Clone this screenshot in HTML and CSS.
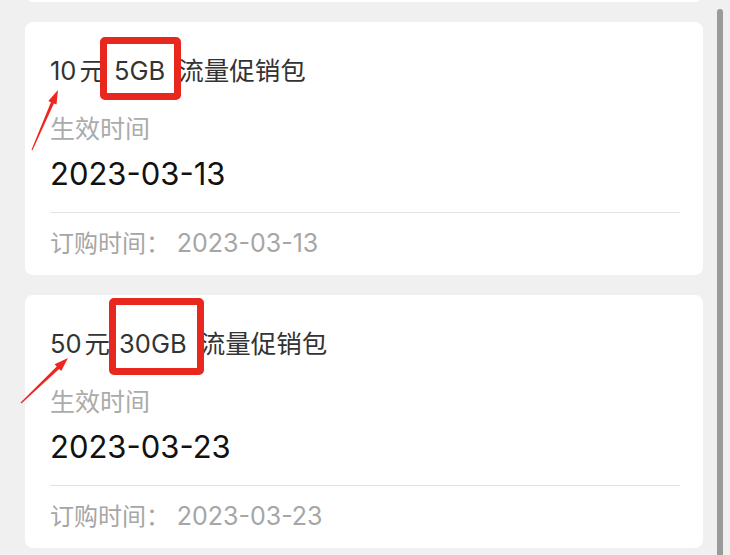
FILE: index.html
```html
<!DOCTYPE html>
<html>
<head>
    <title>流量包订购记录</title>
    <link rel="stylesheet" href="styles.css">
</head>
<body>
    <div class="list">
        <div class="card"></div>

        <div class="card">
            <div class="title"><span class="num">10</span>元<span class="mark mark-a">5GB</span>流量促销包</div>
            <div class="label">生效时间</div>
            <div class="date">2023-03-13</div>
            <div class="foot">订购时间： <span class="foot-date">2023-03-13</span></div>
            <svg class="arrow" width="80" height="140" viewBox="0 0 80 140">
                <polygon points="58,68 56.5,82.6 53.9,81.4 32.5,128.2 31.5,127.8 50.9,80.2 48.3,79" />
            </svg>
        </div>

        <div class="card">
            <div class="title"><span class="num">50</span>元<span class="mark mark-b">30GB</span>流量促销包</div>
            <div class="label">生效时间</div>
            <div class="date">2023-03-23</div>
            <div class="foot">订购时间： <span class="foot-date">2023-03-23</span></div>
            <svg class="arrow" width="80" height="140" viewBox="0 0 80 140">
                <polygon points="68,63 61.2,76.1 59.1,74.1 21.4,108.5 20.6,107.5 56.7,71.4 54.6,69.3" />
            </svg>
        </div>
    </div>
    <div class="scrollbar"></div>
</body>
</html>
```

FILE: styles.css
```css
html, body { margin: 0; height: 100%; overflow: hidden; }
body { background: #f0f0f0; font-family: Inter, "Noto Sans CJK SC", sans-serif; }
.list { display: flex; flex-direction: column; gap: 20px; padding: 0 27px 0 25px; margin-top: -251px; }
.card { position: relative; background: white; border-radius: 8px; height: 253px; box-sizing: border-box; padding: 32px 23px 16px 25px; }
.title { font-size: 25.5px; line-height: 34px; color: #333; }
.num { margin-right: 3px; }
.mark { position: relative; margin: 0 13px 0 9px; }
.mark::after { content: ""; position: absolute; border: 7px solid #e8271f; border-radius: 5px; }
.mark-a::after { left: -14px; right: -16px; top: -18px; bottom: -14px; }
.mark-b::after { left: -10px; right: -17px; top: -30px; bottom: -16px; }
.label { font-size: 25px; line-height: 32px; color: #ababab; margin-top: 25px; }
.date { font-size: 31px; line-height: 40px; color: #111; margin-top: 9px; }
.foot { font-size: 24px; line-height: 32px; color: #a6a6a6; margin-top: 18px; padding-top: 14px; border-top: 1px solid #e2e2e2; }
.foot-date { font-size: 25px; }
.arrow { position: absolute; left: -25px; top: 0; fill: #f0261e; }
.scrollbar { position: fixed; top: 9px; bottom: 0; right: 7px; width: 6px; background: #9a9a9a; border-radius: 3px 3px 0 0; }
```
